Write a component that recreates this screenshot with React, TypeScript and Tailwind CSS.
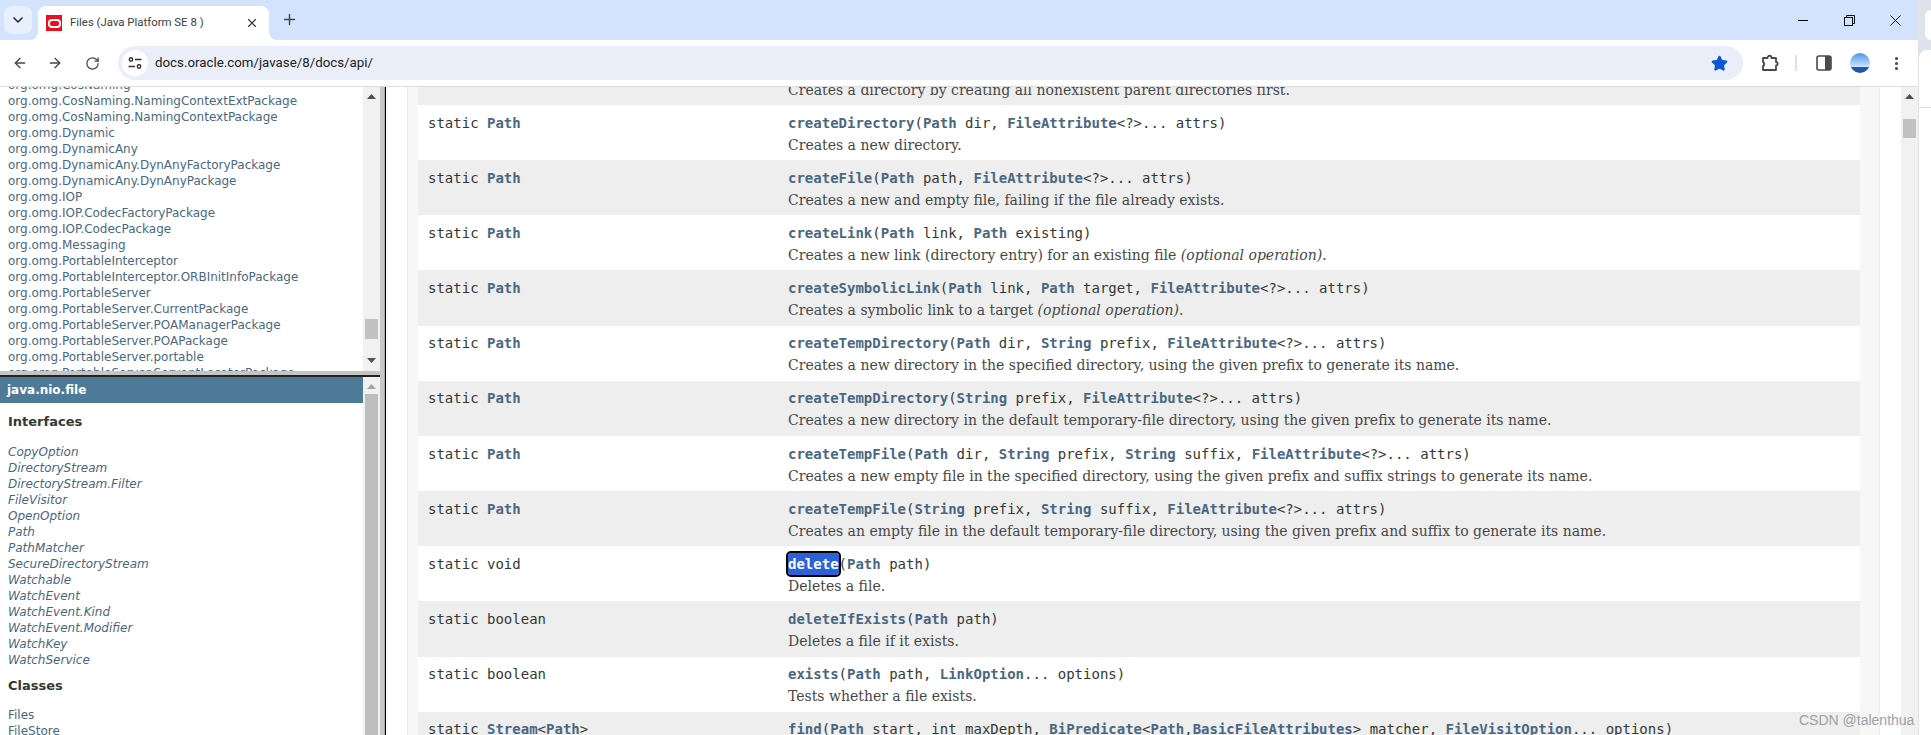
import { ArrowLeft, ArrowRight, RotateCw, ChevronDown, Plus, X, Star, EllipsisVertical } from "lucide-react";

const packages = [
  "org.omg.CosNaming",
  "org.omg.CosNaming.NamingContextExtPackage",
  "org.omg.CosNaming.NamingContextPackage",
  "org.omg.Dynamic",
  "org.omg.DynamicAny",
  "org.omg.DynamicAny.DynAnyFactoryPackage",
  "org.omg.DynamicAny.DynAnyPackage",
  "org.omg.IOP",
  "org.omg.IOP.CodecFactoryPackage",
  "org.omg.IOP.CodecPackage",
  "org.omg.Messaging",
  "org.omg.PortableInterceptor",
  "org.omg.PortableInterceptor.ORBInitInfoPackage",
  "org.omg.PortableServer",
  "org.omg.PortableServer.CurrentPackage",
  "org.omg.PortableServer.POAManagerPackage",
  "org.omg.PortableServer.POAPackage",
  "org.omg.PortableServer.portable",
  "org.omg.PortableServer.ServantLocatorPackage",
];

const interfaces = [
  "CopyOption",
  "DirectoryStream",
  "DirectoryStream.Filter",
  "FileVisitor",
  "OpenOption",
  "Path",
  "PathMatcher",
  "SecureDirectoryStream",
  "Watchable",
  "WatchEvent",
  "WatchEvent.Kind",
  "WatchEvent.Modifier",
  "WatchKey",
  "WatchService",
];

// *word* marks a link in the signature
const rows = [
  { type: "static *Path*", sig: "*createDirectories*(*Path* dir, *FileAttribute*<?>... attrs)", desc: "Creates a directory by creating all nonexistent parent directories first." },
  { type: "static *Path*", sig: "*createDirectory*(*Path* dir, *FileAttribute*<?>... attrs)", desc: "Creates a new directory." },
  { type: "static *Path*", sig: "*createFile*(*Path* path, *FileAttribute*<?>... attrs)", desc: "Creates a new and empty file, failing if the file already exists." },
  { type: "static *Path*", sig: "*createLink*(*Path* link, *Path* existing)", desc: "Creates a new link (directory entry) for an existing file ", opt: true },
  { type: "static *Path*", sig: "*createSymbolicLink*(*Path* link, *Path* target, *FileAttribute*<?>... attrs)", desc: "Creates a symbolic link to a target ", opt: true },
  { type: "static *Path*", sig: "*createTempDirectory*(*Path* dir, *String* prefix, *FileAttribute*<?>... attrs)", desc: "Creates a new directory in the specified directory, using the given prefix to generate its name." },
  { type: "static *Path*", sig: "*createTempDirectory*(*String* prefix, *FileAttribute*<?>... attrs)", desc: "Creates a new directory in the default temporary-file directory, using the given prefix to generate its name." },
  { type: "static *Path*", sig: "*createTempFile*(*Path* dir, *String* prefix, *String* suffix, *FileAttribute*<?>... attrs)", desc: "Creates a new empty file in the specified directory, using the given prefix and suffix strings to generate its name." },
  { type: "static *Path*", sig: "*createTempFile*(*String* prefix, *String* suffix, *FileAttribute*<?>... attrs)", desc: "Creates an empty file in the default temporary-file directory, using the given prefix and suffix to generate its name." },
  { type: "static void", sig: "#delete#(*Path* path)", desc: "Deletes a file." },
  { type: "static boolean", sig: "*deleteIfExists*(*Path* path)", desc: "Deletes a file if it exists." },
  { type: "static boolean", sig: "*exists*(*Path* path, *LinkOption*... options)", desc: "Tests whether a file exists." },
  { type: "static *Stream*<*Path*>", sig: "*find*(*Path* start, int maxDepth, *BiPredicate*<*Path*,*BasicFileAttributes*> matcher, *FileVisitOption*... options)", desc: "" },
];

const Code = ({ text }: { text: string }) => {
  const parts = text.split(/(\*[^*]+\*|#[^#]+#)/).filter(Boolean);
  return (
    <span className="font-['DejaVu_Sans_Mono',monospace] text-[14px] whitespace-pre text-[#353833]">
      {parts.map((p, i) =>
        p.startsWith("*") ? (
          <b key={i} className="font-bold text-[#4a6782]">{p.slice(1, -1)}</b>
        ) : p.startsWith("#") ? (
          <b key={i} className="font-bold text-white bg-[#2b62d9] rounded-[3px] outline-2 outline-black py-[3px]">{p.slice(1, -1)}</b>
        ) : (
          <span key={i}>{p}</span>
        )
      )}
    </span>
  );
};

const TriUp = ({ light }: { light?: boolean }) => (
  <svg width="9" height="5" viewBox="0 0 9 5"><path d="M4.5 0L9 5H0z" fill={light ? "#a3a3a3" : "#505050"} /></svg>
);

const TriDown = () => (
  <svg width="9" height="5" viewBox="0 0 9 5"><path d="M0 0h9L4.5 5z" fill="#505050" /></svg>
);

const TabBar = () => (
  <div className="h-10 bg-[#d3e3fd] flex shrink-0 relative">
    <div className="ml-1 mt-1.5 w-7 h-7 rounded-lg bg-[#e9f0fd] flex items-center justify-center">
      <ChevronDown size={16} strokeWidth={2.5} className="text-[#2b2b2b]" />
    </div>
    <div className="relative ml-1.5 mt-1.5 w-[231px] h-[34px] bg-white rounded-t-lg flex items-center pl-2 pr-2.5">
      <div className="absolute -left-2 bottom-0 w-2 h-2 bg-white"><div className="w-2 h-2 bg-[#d3e3fd] rounded-br-lg" /></div>
      <div className="absolute -right-2 bottom-0 w-2 h-2 bg-white"><div className="w-2 h-2 bg-[#d3e3fd] rounded-bl-lg" /></div>
      <div className="w-4 h-4 bg-[#e8101f] flex items-center justify-center shrink-0">
        <div className="w-[13px] h-[9px] rounded-[4px] border-2 border-white" />
      </div>
      <span className="ml-2 flex-1 font-['Roboto',sans-serif] text-[11.4px] text-[#3c4043] whitespace-pre">Files (Java Platform SE 8 )</span>
      <X size={14} strokeWidth={2} className="text-[#3c3c3c]" />
    </div>
    <Plus size={17} strokeWidth={2} className="ml-[12px] mt-[11px] text-[#444746]" />
    <div className="ml-auto flex items-center">
      <div className="w-[46px] flex justify-center">
        <div className="w-[10px] h-px bg-black" />
      </div>
      <div className="w-[46px] flex justify-center">
        <svg width="11" height="11" viewBox="0 0 11 11" fill="none" stroke="#111" strokeWidth="1">
          <rect x="0.5" y="2.5" width="8" height="8" />
          <path d="M2.5 2.5V0.5h8v8H8.5" />
        </svg>
      </div>
      <div className="w-[46px] flex justify-center">
        <svg width="11" height="11" viewBox="0 0 11 11" stroke="#111" strokeWidth="1"><path d="M0.5 0.5l10 10M10.5 0.5l-10 10" /></svg>
      </div>
    </div>
  </div>
);

const Toolbar = () => (
  <div className="h-[47px] bg-white rounded-tr-lg border-b border-[#dcdcdc] flex items-center shrink-0 relative">
    <ArrowLeft size={16} strokeWidth={2} className="ml-3 text-[#474747]" />
    <ArrowRight size={16} strokeWidth={2} className="ml-[19px] text-[#474747]" />
    <RotateCw size={15} strokeWidth={2} className="ml-[22px] text-[#474747]" />
    <div className="ml-[18px] w-[1625px] h-[34px] rounded-full bg-[#eaeef8] flex items-center">
      <div className="ml-1 w-[26px] h-[26px] rounded-full bg-white flex items-center justify-center">
        <svg width="14" height="14" viewBox="0 0 14 14" fill="none" stroke="#333" strokeWidth="1.4">
          <circle cx="3" cy="3.5" r="1.7" />
          <path d="M7 3.5h6.5M0.5 10.5H7" />
          <circle cx="11" cy="10.5" r="1.7" />
        </svg>
      </div>
      <span className="ml-[7px] font-['Roboto',sans-serif] text-[13.3px] text-[#202124]">docs.oracle.com/javase/8/docs/api/</span>
      <Star size={17} className="ml-auto mr-[15px] text-[#0b57d0] fill-[#0b57d0]" />
    </div>
    <svg className="ml-[18px]" width="18" height="18" viewBox="0 0 18 18" fill="none" stroke="#4a4a4a" strokeWidth="1.8">
      <path d="M2 4h4.5c0-3 4-3 4 0H15v4c2.2 0 2.2 3.5 0 3.5V16H2v-4c1.5 0 1.5-4 0-4z" strokeLinejoin="round" />
    </svg>
    <div className="ml-[16px] w-0.5 h-[16px] bg-[#d3e3fd]" />
    <svg className="ml-[19px]" width="16" height="16" viewBox="0 0 16 16">
      <rect x="1" y="1" width="14" height="14" rx="2" fill="#fff" stroke="#4a4a4a" strokeWidth="1.6" />
      <path d="M9 1h4a2 2 0 012 2v10a2 2 0 01-2 2H9z" fill="#4a4a4a" />
    </svg>
    <div className="ml-[18px] w-5 h-5 rounded-full overflow-hidden bg-[linear-gradient(#4d97ef,#cfe3fb_70%,#1f5fb3_72%,#1a4d9e)]" />
    <EllipsisVertical size={17} strokeWidth={2.4} className="ml-[18px] text-[#474747]" />
  </div>
);

const UpperFrame = () => (
  <div className="h-[284px] flex overflow-hidden shrink-0">
    <div className="w-[363px] overflow-hidden">
      <div className="-mt-[10px] pl-2 font-['DejaVu_Sans',sans-serif] text-[12px] leading-4 text-[#4a6782] whitespace-nowrap">
        {packages.map((p) => (
          <div key={p}>{p}</div>
        ))}
      </div>
    </div>
    <div className="w-[17px] bg-[#f1f1f1] flex flex-col items-center relative">
      <div className="mt-[7px]"><TriUp /></div>
      <div className="absolute top-[232px] left-0.5 w-[13px] h-5 bg-[#c1c1c1]" />
      <div className="mt-auto mb-2"><TriDown /></div>
    </div>
  </div>
);

const LowerFrame = () => (
  <div className="flex-1 flex overflow-hidden border-t-2 border-[#222] min-h-0">
    <div className="w-[363px] overflow-hidden font-['DejaVu_Sans',sans-serif] text-[12px] leading-4 text-[#4a6782] whitespace-nowrap">
      <div className="h-[26px] bg-[#4d7a97] pl-[7px] flex items-center text-white font-bold text-[12px]">java.nio.file</div>
      <div className="mt-[11px] pl-2 font-bold text-[13px] text-[#353833]">Interfaces</div>
      <div className="mt-[14px] pl-2 italic">
        {interfaces.map((n) => (
          <div key={n}>{n}</div>
        ))}
      </div>
      <div className="mt-[10px] pl-2 font-bold text-[13px] text-[#353833]">Classes</div>
      <div className="mt-[13px] pl-2">
        <div>Files</div>
        <div>FileStore</div>
      </div>
    </div>
    <div className="w-[17px] bg-[#f1f1f1] flex flex-col items-center">
      <div className="mt-[7px] mb-[5px]"><TriUp light /></div>
      <div className="w-[13px] flex-1 bg-[#bdbdbd]" />
    </div>
  </div>
);

const MethodTable = () => (
  <div className="flex-1 flex min-w-0 overflow-hidden">
    <div className="w-[21px] bg-white" />
    <div className="w-[11px] bg-[#f7f7f7] border-l border-[#ececec]" />
    <div className="w-[1442px] overflow-hidden">
      <div className="-mt-[37.16px]">
        {rows.map((r, i) => (
          <div key={i} className={`h-[55.16px] flex pl-2.5 pt-[7.7px] ${i % 2 === 0 ? "bg-[#eeeeef]" : "bg-white"}`}>
            <div className="w-[360px] shrink-0 leading-[18px]">
              <Code text={r.type} />
            </div>
            <div className="min-w-0">
              <div className="leading-[18px]">
                <Code text={r.sig} />
              </div>
              <div className="mt-1 leading-[18px] font-['DejaVu_Serif',serif] text-[14px] text-[#474747] whitespace-pre">
                {r.desc}
                {r.opt && <i>(optional operation)</i>}
                {r.opt && "."}
              </div>
            </div>
          </div>
        ))}
      </div>
    </div>
    <div className="w-5 bg-[#f7f7f7] border-r border-[#ececec]" />
    <div className="w-[21px] bg-white" />
    <div className="w-[17px] bg-[#f1f1f1] relative flex justify-center">
      <div className="mt-[7px]"><TriUp /></div>
      <div className="absolute top-[32px] left-0.5 w-[13px] h-[19px] bg-[#c1c1c1]" />
    </div>
  </div>
);

export default function App() {
  return (
    <div className="w-[1931px] h-[735px] overflow-hidden flex relative bg-white">
      <div className="w-[1918px] flex flex-col shrink-0">
        <TabBar />
        <Toolbar />
        <div className="flex-1 flex min-h-0">
          <div className="w-[380px] flex flex-col shrink-0">
            <UpperFrame />
            <div className="h-1 bg-[#c4c4c4] shrink-0" />
            <LowerFrame />
          </div>
          <div className="w-[5px] bg-[#c8c8c8] border-r border-[#aaa]" />
          <div className="w-px bg-black" />
          <MethodTable />
        </div>
      </div>
      <div className="flex-1 flex flex-col border-l border-[#e3e3e3] bg-white">
        <div className="h-[108px] bg-[#dde3ea] flex flex-col items-end pt-[10px]">
          <div className="w-[6px] h-[30px] bg-white rounded-l-lg" />
          <div className="mt-[10px] w-[12px] flex-1 bg-white rounded-tl-lg border-b border-[#dcdcdc]" />
        </div>
      </div>
      <span className="absolute left-[1799px] top-[711px] font-['Liberation_Sans',sans-serif] text-[14px] leading-[18px] text-[#a0a0a0]">CSDN @talenthua</span>
    </div>
  );
}
